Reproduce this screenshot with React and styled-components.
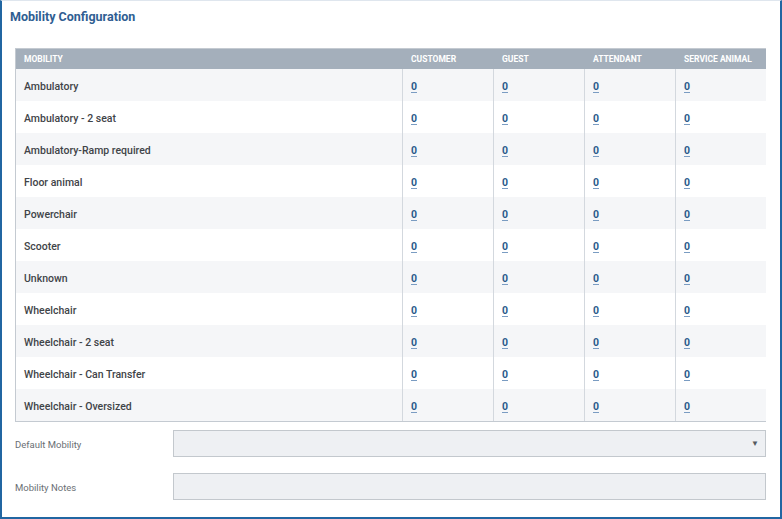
import React from 'react';
import styled, { createGlobalStyle } from 'styled-components';

const Global = createGlobalStyle`
  html, body { margin: 0; padding: 0; background: #ffffff; }
  body { font-family: Roboto, "Liberation Sans", sans-serif; }
`;

const Frame = styled.div`
  box-sizing: border-box;
  width: 782px;
  height: 519px;
  border: 2px solid #2166a2;
  border-top: 1px solid #dfe6ee;
  background: #fff;
  padding: 0 14px 0 13px;
`;

const Title = styled.h1`
  margin: 0 0 0 -5px;
  padding-top: 8px;
  height: 47px;
  box-sizing: border-box;
  font-size: 12.5px;
  font-weight: 700;
  color: #2f5e92;
`;

const Table = styled.div`
  border: 1px solid #c4cad1;
  display: grid;
  grid-template-columns: 386px repeat(4, 91px);
`;

const HeadCell = styled.div`
  height: 20px;
  background: #a4afbb;
  color: #fff;
  font-size: 8.5px;
  font-weight: 700;
  display: flex;
  align-items: center;
  padding-left: ${p => (p.$first ? '8px' : '9px')};
  text-transform: uppercase;
`;

const Cell = styled.div`
  height: 32px;
  box-sizing: border-box;
  display: flex;
  align-items: center;
  padding: 2px 0 0 8px;
  background: ${p => (p.$odd ? '#f5f6f8' : '#ffffff')};
  border-left: ${p => (p.$first ? 'none' : '1px solid #d3d8de')};
  font-size: 10.5px;
  font-weight: 500;
  color: #3f4448;
`;

const Count = styled.span`
  color: #2c5c8c;
  font-weight: 700;
  font-size: 10.5px;
  text-decoration: underline dashed #7a9cc2;
  text-underline-offset: 2px;
`;

const FormRow = styled.div`
  display: flex;
  align-items: center;
  margin-top: ${p => p.$gap}px;
`;

const Label = styled.div`
  width: 158px;
  padding-top: 2px;
  font-size: 9.5px;
  color: #6a6f74;
`;

const Field = styled.div`
  flex: 1;
  height: 27px;
  box-sizing: border-box;
  background: #eef0f3;
  border: 1px solid #c3c8cd;
  display: flex;
  align-items: center;
  justify-content: flex-end;
  padding-right: 6px;
  font-size: 8px;
  color: #555a5f;
`;

const cols = ['Customer', 'Guest', 'Attendant', 'Service Animal'];
const rows = [
  'Ambulatory',
  'Ambulatory - 2 seat',
  'Ambulatory-Ramp required',
  'Floor animal',
  'Powerchair',
  'Scooter',
  'Unknown',
  'Wheelchair',
  'Wheelchair - 2 seat',
  'Wheelchair - Can Transfer',
  'Wheelchair - Oversized',
];

export default function App() {
  return (
    <>
      <Global />
      <Frame>
        <Title>Mobility Configuration</Title>
        <Table>
          <HeadCell $first>Mobility</HeadCell>
          {cols.map(c => <HeadCell key={c}>{c}</HeadCell>)}
          {rows.map((r, i) => (
            <React.Fragment key={r}>
              <Cell $first $odd={i % 2 === 0}>{r}</Cell>
              {cols.map(c => (
                <Cell key={c} $odd={i % 2 === 0}><Count>0</Count></Cell>
              ))}
            </React.Fragment>
          ))}
        </Table>
        <FormRow $gap={8}>
          <Label>Default Mobility</Label>
          <Field>▼</Field>
        </FormRow>
        <FormRow $gap={16}>
          <Label>Mobility Notes</Label>
          <Field />
        </FormRow>
      </Frame>
    </>
  );
}
